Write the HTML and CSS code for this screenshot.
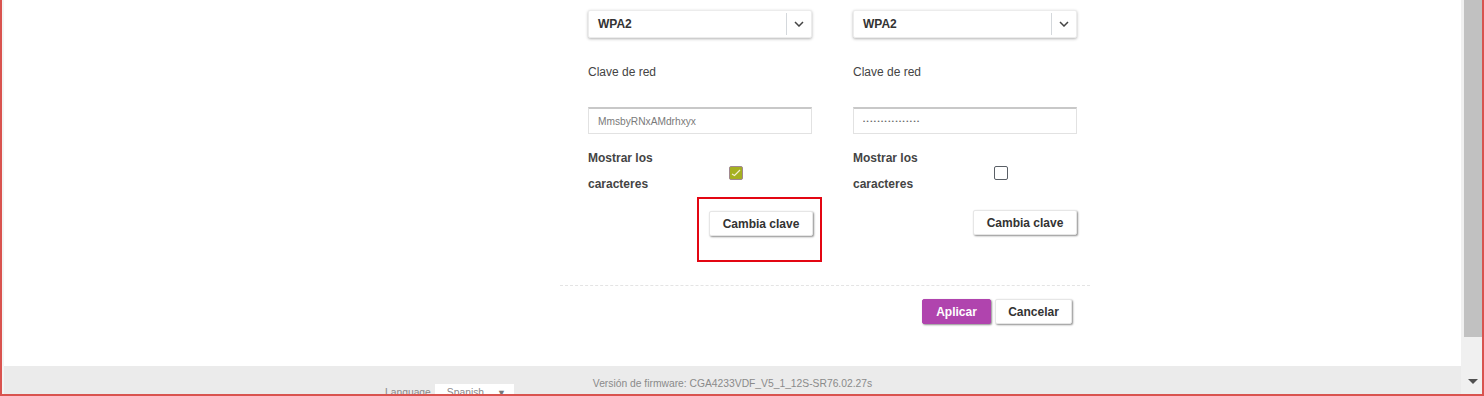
FILE: index.html
```html
<!DOCTYPE html>
<html lang="es">
  <head>
    <meta charset="UTF-8" />
    <meta name="viewport" content="width=device-width, initial-scale=1.0" />
    <title>Configuración Wi-Fi</title>
    <link rel="stylesheet" href="styles.css">
  </head>
  <body>
    <div class="frame">
      <div class="viewport">
        <main class="content">
          <div class="form-area">
            <div class="columns">
              <div class="band">
                <div class="select">
                  <span class="select-value">WPA2</span>
                  <span class="select-arrow">
                    <svg width="10" height="6" viewBox="0 0 10 6">
                      <path d="M1 1 L5 5 L9 1" fill="none" stroke="#444" stroke-width="1.5"></path>
                    </svg>
                  </span>
                </div>
                <div class="field-label">Clave de red</div>
                <input class="text-input" type="text" value="MmsbyRNxAMdrhxyx" />
                <div class="show-row">
                  <div class="show-label">Mostrar los<br />caracteres</div>
                  <span class="checkbox checked">
                    <svg width="10" height="8" viewBox="0 0 10 8">
                      <path d="M1 5 L3.5 6.5 L9 1" fill="none" stroke="#f4f0d0" stroke-width="1.2"></path>
                    </svg>
                  </span>
                </div>
                <div class="button-row">
                  <span class="highlight-wrap">
                    <button class="btn">Cambia clave</button>
                    <span class="highlight"></span>
                  </span>
                </div>
              </div>

              <div class="band">
                <div class="select">
                  <span class="select-value">WPA2</span>
                  <span class="select-arrow">
                    <svg width="10" height="6" viewBox="0 0 10 6">
                      <path d="M1 1 L5 5 L9 1" fill="none" stroke="#444" stroke-width="1.5"></path>
                    </svg>
                  </span>
                </div>
                <div class="field-label">Clave de red</div>
                <input class="text-input masked" type="text" value="••••••••••••••••" />
                <div class="show-row">
                  <div class="show-label">Mostrar los<br />caracteres</div>
                  <span class="checkbox"></span>
                </div>
                <div class="button-row raised">
                  <button class="btn">Cambia clave</button>
                </div>
              </div>
            </div>

            <div class="divider"></div>

            <div class="actions">
              <button class="btn btn-primary">Aplicar</button>
              <button class="btn btn-cancel">Cancelar</button>
            </div>
          </div>
        </main>

        <footer class="footer">
          <div class="language">
            <span class="language-label">Language</span>
            <span class="language-select">Spanish <span class="tri">&#9660;</span></span>
          </div>
          <div class="firmware">Versión de firmware: CGA4233VDF_V5_1_12S-SR76.02.27s</div>
        </footer>
      </div>

      <div class="scrollbar">
        <div class="scroll-thumb"></div>
        <div class="scroll-track">
          <span class="scroll-arrow"></span>
        </div>
      </div>
    </div>
  </body>
</html>
```

FILE: styles.css
```css
body {
  font-family: "Liberation Sans", Arial, sans-serif;
  margin: 0;
  padding: 0;
  color: #333;
  overflow: hidden;
}

.frame {
  width: 1484px;
  height: 396px;
  box-sizing: border-box;
  border-left: 2px solid #d9534f;
  border-right: 2px solid #d9534f;
  border-bottom: 2px solid #d9534f;
  display: flex;
  overflow: hidden;
}

.viewport {
  flex: 1;
  display: flex;
  flex-direction: column;
  padding-left: 2px;
  background-color: #f4f4f4;
  border-right: 3px solid #f0f0f0;
}

/* Main white area */
.content {
  height: 366px;
  background-color: #fff;
  padding-left: 556px;
}

.form-area {
  width: 530px;
}

.columns {
  display: flex;
  gap: 41px;
  padding-left: 28px;
}

.band {
  width: 224px;
  display: flex;
  flex-direction: column;
}

/* Select */
.select {
  margin-top: 10px;
  height: 28px;
  box-sizing: border-box;
  border: 1px solid #ececec;
  border-radius: 2px;
  box-shadow: 0 1px 3px rgba(0, 0, 0, 0.3);
  display: flex;
  align-items: center;
  background-color: #fff;
}

.select-value {
  flex: 1;
  padding-left: 9px;
  font-size: 12px;
  font-weight: bold;
  color: #333;
}

.select-arrow {
  width: 24px;
  height: 22px;
  border-left: 1px solid #d4d8dc;
  display: flex;
  justify-content: center;
  align-items: center;
}

.field-label {
  margin-top: 27px;
  font-size: 12px;
  line-height: 14px;
  color: #444;
}

.text-input {
  margin-top: 28px;
  height: 27px;
  box-sizing: border-box;
  border: 1px solid #e2e2e2;
  border-top: 2px solid #c8c8c8;
  padding: 0 9px;
  font-family: "Liberation Sans", Arial, sans-serif;
  font-size: 10.2px;
  color: #7a7a7a;
  outline: none;
}

.text-input.masked {
  font-size: 6px;
  color: #666;
  letter-spacing: 1.5px;
}

/* Show characters */
.show-row {
  margin-top: 11px;
  display: flex;
  align-items: center;
}

.show-label {
  width: 141px;
  font-size: 12px;
  font-weight: bold;
  line-height: 26px;
  color: #444;
}

.checkbox {
  width: 14px;
  height: 14px;
  box-sizing: border-box;
  border: 1px solid #5a5f66;
  border-radius: 2px;
  margin-top: 3px;
  display: flex;
  justify-content: center;
  align-items: center;
  background-color: #fff;
}

.checkbox.checked {
  background-color: #a5b020;
  border-color: #a08890;
}

/* Buttons */
.button-row {
  margin-top: 14px;
  display: flex;
  justify-content: flex-end;
  margin-right: -1px;
}

.button-row.raised {
  margin-top: 13px;
  margin-right: 0;
}

.highlight-wrap {
  position: relative;
  display: flex;
}

.highlight {
  position: absolute;
  left: -12px;
  top: -14px;
  width: 125px;
  height: 65px;
  box-sizing: border-box;
  border: 2px solid #e30613;
}

.btn {
  height: 25px;
  width: 104px;
  padding: 0;
  box-sizing: border-box;
  background-color: #fff;
  border: 1px solid #e6e6e6;
  border-radius: 2px;
  box-shadow: 1px 1px 2px rgba(0, 0, 0, 0.45);
  font-family: "Liberation Sans", Arial, sans-serif;
  font-size: 12px;
  font-weight: bold;
  color: #333;
  cursor: pointer;
}

.divider {
  margin-top: 49px;
  border-top: 1px dashed #e4e4e4;
}

.actions {
  margin-top: 13px;
  display: flex;
  justify-content: flex-end;
  gap: 4px;
  padding-right: 18px;
}

.btn-primary {
  width: 69px;
  background-color: #b044ae;
  border-color: #b044ae;
  color: #fff;
}

.btn-cancel {
  width: 77px;
}

/* Footer */
.footer {
  flex: 1;
  background-color: #ebebeb;
  display: flex;
  align-items: flex-end;
  font-size: 10.3px;
  color: #8a8a8a;
}

.language {
  margin-left: 381px;
  display: flex;
  align-items: flex-end;
  margin-bottom: -6px;
}

.language-label {
  line-height: 14px;
}

.language-select {
  margin-left: 4px;
  width: 79px;
  height: 16px;
  padding-top: 2px;
  padding-left: 12px;
  box-sizing: border-box;
  background-color: #fff;
  line-height: 14px;
}

.tri {
  margin-left: 10px;
  font-size: 9px;
  color: #777;
}

.firmware {
  margin-left: 79px;
  margin-bottom: 4px;
  line-height: 12px;
}

/* Scrollbar */
.scrollbar {
  width: 18px;
  display: flex;
  flex-direction: column;
  background-color: #f0f0f0;
}

.scroll-thumb {
  height: 337px;
  background-color: #c1c1c1;
}

.scroll-track {
  flex: 1;
  display: flex;
  justify-content: center;
  align-items: flex-end;
  padding-bottom: 10px;
}

.scroll-arrow {
  width: 0;
  height: 0;
  border-left: 5px solid transparent;
  border-right: 5px solid transparent;
  border-top: 5px solid #505050;
}
```
